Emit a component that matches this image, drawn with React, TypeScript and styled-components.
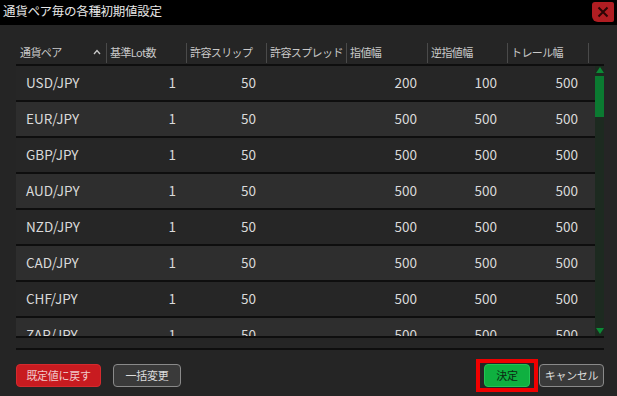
import React from "react";
import styled, { createGlobalStyle } from "styled-components";

const Global = createGlobalStyle`
  html, body { margin: 0; padding: 0; background: #252525; }
  body { font-family: "Noto Sans CJK JP", "Noto Sans", sans-serif; }
  * { box-sizing: border-box; }
`;

const Dialog = styled.div`
  width: 617px;
  height: 396px;
  background: #252525;
  display: flex;
  flex-direction: column;
  overflow: hidden;
`;

const TitleBar = styled.div`
  height: 25px;
  background: #000;
  display: flex;
  align-items: center;
  justify-content: space-between;
  padding: 0 3px 0 3px;
`;

const Title = styled.div`
  color: #e6e6e6;
  font-size: 12.5px;
  letter-spacing: -0.3px;
  line-height: 1;
  margin-top: -3px;
`;

const CloseBtn = styled.div`
  width: 22px;
  height: 20px;
  background: #b01d22;
  border-radius: 3px 2px 2px 6px;
  display: flex;
  align-items: center;
  justify-content: center;
  margin-top: -2px;
`;

const TableWrap = styled.div`
  margin: 18px 13px 0 16px;
  display: flex;
  flex-direction: column;
`;

const cols = "90px 80px 80px 80px 81px 80px 81px 16px";

const HeaderRow = styled.div`
  display: grid;
  grid-template-columns: ${cols};
  height: 23px;
  border-bottom: 2px solid #0e0e0e;
`;

const HeaderCell = styled.div<{ $sep?: boolean }>`
  display: flex;
  align-items: center;
  justify-content: space-between;
  color: #c9c9c9;
  font-size: 11px;
  letter-spacing: -0.6px;
  white-space: nowrap;
  overflow: hidden;
  padding: 0 6px 2px ${(p) => (p.$sep ? "3px" : "4px")};
  border-left: ${(p) => (p.$sep ? "1px solid #4a4a4a" : "none")};
  margin-bottom: 1px;
`;

const BodyArea = styled.div`
  display: flex;
  height: 272px;
  border-bottom: 2px solid #0e0e0e;
`;

const Viewport = styled.div`
  flex: 1;
  overflow: hidden;
`;

const Row = styled.div<{ $alt: boolean }>`
  display: grid;
  grid-template-columns: 90px 80px 80px 80px 81px 80px 81px 7px;
  height: 36px;
  background: ${(p) => (p.$alt ? "#2e2e2e" : "#262626")};
  border-bottom: 2px solid #0e0e0e;
  color: #dadada;
  font-size: 13.5px;
`;

const Cell = styled.div<{ $left?: boolean }>`
  display: flex;
  align-items: center;
  white-space: nowrap;
  justify-content: ${(p) => (p.$left ? "flex-start" : "flex-end")};
  padding: 0 ${(p) => (p.$left ? "0" : "10px")} 2px ${(p) => (p.$left ? "10px" : "0")};
`;

const ScrollTrack = styled.div`
  width: 9px;
  background: #1d2a20;
  position: relative;
  display: flex;
  flex-direction: column;
  align-items: center;
  justify-content: space-between;
  padding: 1px 0 2px 0;
`;

const Thumb = styled.div`
  position: absolute;
  left: 0;
  top: 10px;
  width: 9px;
  height: 41px;
  background: #0b7a31;
`;

const Arrow = styled.div<{ $down?: boolean }>`
  width: 0;
  height: 0;
  border-left: 4px solid transparent;
  border-right: 4px solid transparent;
  ${(p) =>
    p.$down
      ? "border-top: 6px solid #0c8a36;"
      : "border-bottom: 6px solid #0c8a36;"}
`;

const HScroll = styled.div`
  height: 12px;
  border-bottom: 2px solid #0e0e0e;
`;

const Footer = styled.div`
  flex: 1;
  display: flex;
  align-items: center;
  justify-content: space-between;
  padding: 0 13px 0 16px;
`;

const Group = styled.div`
  display: flex;
  align-items: center;
  gap: 12px;
  margin-top: 4px;
`;

const Button = styled.div<{ $variant: "red" | "gray" | "green"; $w: number }>`
  width: ${(p) => p.$w}px;
  height: 23px;
  display: flex;
  align-items: center;
  justify-content: center;
  font-size: 11px;
  letter-spacing: -0.3px;
  white-space: nowrap;
  border-radius: 4px;
  padding-bottom: 1px;
  ${(p) =>
    p.$variant === "red"
      ? "background:#c81b20; color:#f1c9c9; border:1px solid #d52a2e;"
      : p.$variant === "green"
      ? "background:#0fb040; color:#0c2a12; border:1px solid #22c554;"
      : "background:#3a3a3a; color:#dcdcdc; border:1px solid #8a8a8a;"}
`;

const Highlight = styled.div`
  border: 4px solid #f00000;
  padding: 1px 4px;
  margin-right: 1px;
`;

const RightGroup = styled.div`
  display: flex;
  align-items: center;
  margin-top: 4px;
`;

const headers = ["基準Lot数", "許容スリップ", "許容スプレッド", "指値幅", "逆指値幅", "トレール幅"];

const rows: [string, string, string, string, string, string, string][] = [
  ["USD/JPY", "1", "50", "", "200", "100", "500"],
  ["EUR/JPY", "1", "50", "", "500", "500", "500"],
  ["GBP/JPY", "1", "50", "", "500", "500", "500"],
  ["AUD/JPY", "1", "50", "", "500", "500", "500"],
  ["NZD/JPY", "1", "50", "", "500", "500", "500"],
  ["CAD/JPY", "1", "50", "", "500", "500", "500"],
  ["CHF/JPY", "1", "50", "", "500", "500", "500"],
  ["ZAR/JPY", "1", "50", "", "500", "500", "500"],
];

export default function App() {
  return (
    <>
      <Global />
      <Dialog>
        <TitleBar>
          <Title>通貨ペア毎の各種初期値設定</Title>
          <CloseBtn>
            <svg width="12" height="12" viewBox="0 0 12 12">
              <path d="M1.5 1.5 L10.5 10.5 M10.5 1.5 L1.5 10.5" stroke="#2a0505" strokeWidth="2" />
            </svg>
          </CloseBtn>
        </TitleBar>
        <TableWrap>
          <HeaderRow>
            <HeaderCell>
              <span>通貨ペア</span>
              <svg width="8" height="6" viewBox="0 0 8 6" style={{ marginRight: -1 }}>
                <path d="M1 5 L4 1.5 L7 5" stroke="#c9c9c9" strokeWidth="1.3" fill="none" />
              </svg>
            </HeaderCell>
            {headers.map((h) => (
              <HeaderCell key={h} $sep>
                {h}
              </HeaderCell>
            ))}
            <HeaderCell $sep />
          </HeaderRow>
          <BodyArea>
            <Viewport>
              {rows.map((r, i) => (
                <Row key={r[0]} $alt={i % 2 === 1}>
                  <Cell $left>{r[0]}</Cell>
                  {r.slice(1).map((v, j) => (
                    <Cell key={j}>{v}</Cell>
                  ))}
                  <Cell />
                </Row>
              ))}
            </Viewport>
            <ScrollTrack>
              <Arrow />
              <Thumb />
              <Arrow $down />
            </ScrollTrack>
          </BodyArea>
          <HScroll />
        </TableWrap>
        <Footer>
          <Group>
            <Button $variant="red" $w={85}>既定値に戻す</Button>
            <Button $variant="gray" $w={68}>一括変更</Button>
          </Group>
          <RightGroup>
            <Highlight>
              <Button $variant="green" $w={46}>決定</Button>
            </Highlight>
            <Button $variant="gray" $w={65}>キャンセル</Button>
          </RightGroup>
        </Footer>
      </Dialog>
    </>
  );
}
